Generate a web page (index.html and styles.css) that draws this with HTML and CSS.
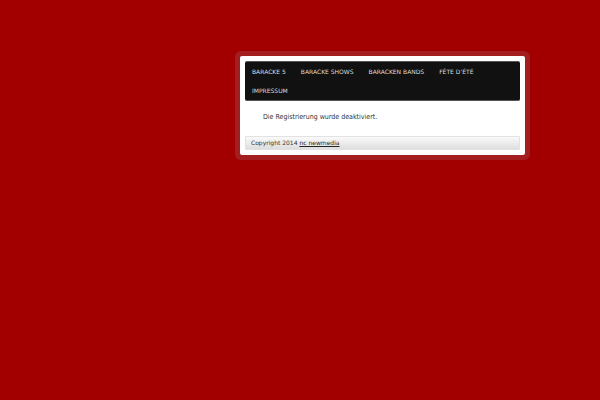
FILE: index.html
```
<!DOCTYPE html>
<html lang="de">

<head>
    <meta charset="UTF-8">
    <title>Baracke 5</title>
    <link rel="stylesheet" href="styles.css">
</head>

<body>

    <div class="page">
        <nav>
            <ul class="menu">
                <li><a href="#">BARACKE 5</a></li>
                <li><a href="#">BARACKE SHOWS</a></li>
                <li><a href="#">BARACKEN BANDS</a></li>
                <li><a href="#">FÊTE D’ÉTÉ</a></li>
                <li><a href="#">IMPRESSUM</a></li>
            </ul>
        </nav>

        <main>
            <p>Die Registrierung wurde deaktiviert.</p>
        </main>

        <footer>Copyright 2014 <a href="#">nc newmedia</a></footer>
    </div>

</body>

</html>
```

FILE: styles.css
```
body {
    margin: 0;
    padding: 56px 75px 20px 40%;
    background-color: #a20000;
    font-family: "DejaVu Sans", sans-serif;
    font-size: 6px;
    color: #333;
}

.page {
    padding: 5px;
    background-color: white;
    border-radius: 2px;
    box-shadow: 0 0 0 5px #a31e1e;
}

nav {
    background-color: #111;
    border-top: 1px solid #555;
    border-bottom: 1px solid #555;
    border-radius: 2px;
}

.menu {
    display: flex;
    flex-wrap: wrap;
    margin: 0;
    padding: 0;
    list-style: none;
}

.menu a {
    display: block;
    padding: 0 8px 0 7px;
    line-height: 19px;
    color: #ddd;
    text-decoration: none;
}

main {
    padding: 9px 18px 12px;
    font-family: "DejaVu Sans Condensed", "DejaVu Sans", sans-serif;
    font-size: 7px;
}

main p {
    margin: 0;
    line-height: 14px;
}

footer {
    padding: 0 5px;
    border: 1px solid #e2e2e2;
    border-radius: 1px;
    background: linear-gradient(#fafafa, #dedede);
    line-height: 12px;
}

footer a {
    color: #222;
}
```
